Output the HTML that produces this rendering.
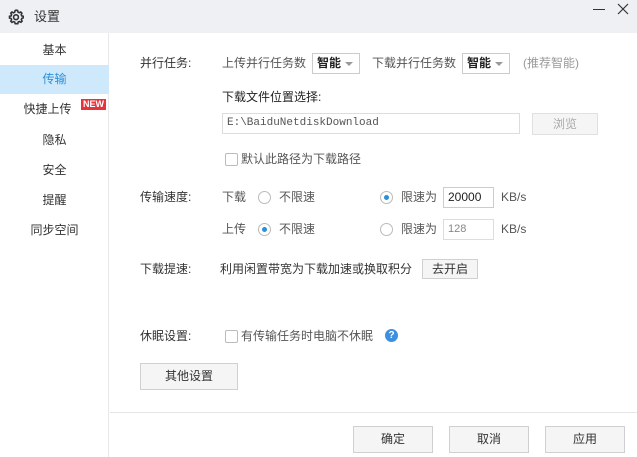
<!DOCTYPE html>
<html><head><meta charset="utf-8"><style>
*{margin:0;padding:0;box-sizing:border-box}
body{width:637px;height:457px;background:#fff;font-family:"Liberation Sans","Noto Sans CJK SC","Microsoft YaHei",sans-serif;font-size:12px;line-height:14px;color:#333;position:relative;overflow:hidden}
.a{position:absolute;white-space:nowrap}
.title{left:0;top:0;width:637px;height:33px;background:#eef0f4}
.side{left:0;top:33px;width:109px;height:424px;border-right:1px solid #e8e8e8}
.nav{left:0;width:109px;height:29px;line-height:29px;text-align:center;font-size:12px;color:#333}
.sel{background:#cde9fb;color:#2d8fd8}
.lbl{color:#333}
.g{color:#555}
.sel2{width:48px;height:21px;border:1px solid #ccc;background:#fff;font-weight:bold;font-size:12px;line-height:19px;padding-left:4px;color:#222}
.sel2:after{content:"";position:absolute;right:6px;top:8px;border:4px solid transparent;border-top:4px solid #999}
.inp{border:1px solid #ddd;background:#fff;height:21px;line-height:19px;padding-left:4px;font-family:"Liberation Mono",monospace;font-size:11px;color:#555}
.btn{border:1px solid #d0d0d0;background:#f5f5f5;text-align:center;color:#333}
.rad{width:13px;height:13px;border:1px solid #bbb;border-radius:50%;background:#fff}
.rad.on:after{content:"";position:absolute;left:3px;top:3px;width:5px;height:5px;border-radius:50%;background:#2d8fd8}
.cb{width:13px;height:13px;border:1px solid #bbb;border-radius:2px;background:#fff}
</style></head><body>
<div class="a title"></div>
<svg class="a" style="left:8px;top:9px" width="16" height="16" viewBox="0 0 16 16"><path d="M8 1.2l1.6.3.4 1.6 1.2.6 1.5-.7 1.2 1.2-.7 1.5.6 1.2 1.6.4v1.6l-1.6.5-.5 1.2.8 1.5-1.2 1.2-1.5-.8-1.2.5-.4 1.7H7.2l-.5-1.6-1.2-.5-1.5.8-1.2-1.2.8-1.5-.5-1.2-1.6-.5V7.3l1.6-.4.5-1.2-.8-1.5 1.2-1.2 1.5.8 1.2-.6.4-1.6z" fill="none" stroke="#333" stroke-width="1.6"/><circle cx="8" cy="8.2" r="2.4" fill="none" stroke="#333" stroke-width="1.6"/></svg>
<div class="a" style="left:34px;top:10px;font-size:13px;color:#333">设置</div>
<div class="a" style="left:593px;top:9px;width:12px;height:1px;background:#333"></div>
<svg class="a" style="left:617px;top:3px" width="12" height="12" viewBox="0 0 12 12"><path d="M1 1L11 11M11 1L1 11" stroke="#333" stroke-width="1.2"/></svg>
<div class="a side"></div>
<div class="a nav" style="top:36px">基本</div>
<div class="a nav sel" style="top:65px">传输</div>
<div class="a nav" style="top:95px;left:-7px">快捷上传</div>
<div class="a" style="left:81px;top:99px;background:#e8323c;color:#fff;font-size:9px;font-weight:bold;padding:0 2px;line-height:11px">NEW</div>
<div class="a nav" style="top:126px">隐私</div>
<div class="a nav" style="top:156px">安全</div>
<div class="a nav" style="top:186px">提醒</div>
<div class="a nav" style="top:216px">同步空间</div>

<div class="a lbl" style="left:140px;top:56px">并行任务:</div>
<div class="a g" style="left:222px;top:56px">上传并行任务数</div>
<div class="a sel2" style="left:312px;top:53px">智能</div>
<div class="a g" style="left:372px;top:56px">下载并行任务数</div>
<div class="a sel2" style="left:462px;top:53px">智能</div>
<div class="a" style="left:523px;top:56px;color:#999">(推荐智能)</div>
<div class="a" style="left:222px;top:90px;color:#222">下载文件位置选择:</div>
<div class="a inp" style="left:222px;top:113px;width:298px">E:\BaiduNetdiskDownload</div>
<div class="a btn" style="left:532px;top:113px;width:66px;height:22px;line-height:20px;color:#aaa;border-color:#e0e0e0">浏览</div>
<div class="a cb" style="left:225px;top:153px"></div>
<div class="a g" style="left:241px;top:152px">默认此路径为下载路径</div>

<div class="a lbl" style="left:140px;top:190px">传输速度:</div>
<div class="a g" style="left:222px;top:190px">下载</div>
<div class="a rad" style="left:258px;top:191px"></div>
<div class="a g" style="left:279px;top:190px">不限速</div>
<div class="a rad on" style="left:380px;top:191px"></div>
<div class="a g" style="left:401px;top:190px">限速为</div>
<div class="a inp" style="left:443px;top:187px;width:51px;font-family:'Liberation Sans',sans-serif;font-size:12px;color:#222;border-color:#ccc">20000</div>
<div class="a g" style="left:501px;top:190px">KB/s</div>
<div class="a g" style="left:222px;top:222px">上传</div>
<div class="a rad on" style="left:258px;top:223px"></div>
<div class="a g" style="left:279px;top:222px">不限速</div>
<div class="a rad" style="left:380px;top:223px"></div>
<div class="a g" style="left:401px;top:222px">限速为</div>
<div class="a inp" style="left:443px;top:219px;width:51px;font-family:'Liberation Sans',sans-serif;font-size:11px;color:#888">128</div>
<div class="a g" style="left:501px;top:222px">KB/s</div>

<div class="a lbl" style="left:140px;top:262px">下载提速:</div>
<div class="a" style="left:220px;top:262px;color:#333">利用闲置带宽为下载加速或换取积分</div>
<div class="a btn" style="left:422px;top:259px;width:56px;height:20px;line-height:18px">去开启</div>

<div class="a lbl" style="left:140px;top:329px">休眠设置:</div>
<div class="a cb" style="left:225px;top:330px"></div>
<div class="a g" style="left:241px;top:329px">有传输任务时电脑不休眠</div>
<div class="a" style="left:385px;top:329px;width:13px;height:13px;border-radius:50%;background:#3d8fe0;color:#fff;font-size:10px;font-weight:bold;text-align:center;line-height:13px">?</div>
<div class="a btn" style="left:140px;top:363px;width:98px;height:27px;line-height:25px">其他设置</div>

<div class="a" style="left:110px;top:412px;width:527px;height:1px;background:#e6e6e6"></div>
<div class="a btn" style="left:353px;top:426px;width:80px;height:27px;line-height:25px">确定</div>
<div class="a btn" style="left:449px;top:426px;width:80px;height:27px;line-height:25px">取消</div>
<div class="a btn" style="left:545px;top:426px;width:80px;height:27px;line-height:25px">应用</div>
</body></html>
